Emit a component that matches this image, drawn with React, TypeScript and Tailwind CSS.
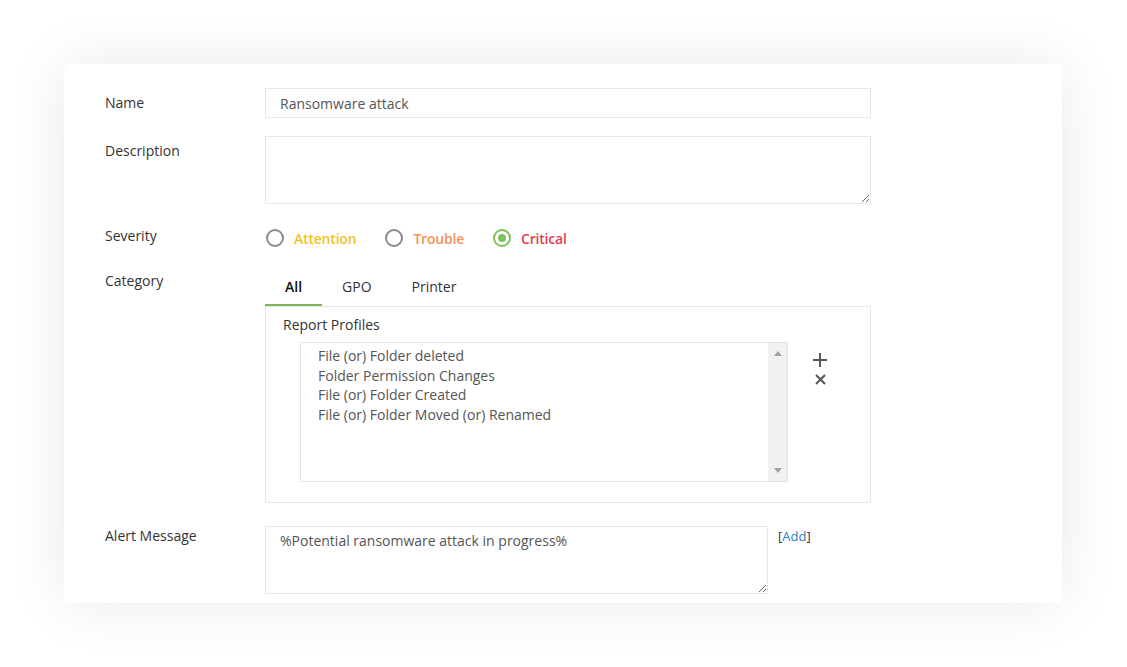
import { useState } from "react"

const profiles = [
  "File (or) Folder deleted",
  "Folder Permission Changes",
  "File (or) Folder Created",
  "File (or) Folder Moved (or) Renamed",
]

const severities = [
  { label: "Attention", color: "text-[#f4c21f]" },
  { label: "Trouble", color: "text-[#f4935a]" },
  { label: "Critical", color: "text-[#e43c4e]" },
]

const tabs = ["All", "GPO", "Printer"]

function Label({ children, className = "" }: { children: React.ReactNode; className?: string }) {
  return <div className={`w-[160px] shrink-0 text-[14px] leading-5 text-[#333] ${className}`}>{children}</div>
}

export default function App() {
  const [severity, setSeverity] = useState("Critical")
  const [tab, setTab] = useState("All")

  return (
    <div className="min-h-[667px] bg-white pt-[64px] px-[64px] font-['Open_Sans',sans-serif]">
      <div className="w-[998px] h-[539px] rounded-md bg-white shadow-[0_0_60px_rgba(0,0,0,0.09)] pt-6 pl-[41px]">
        {/* Name */}
        <div className="flex">
          <Label className="pt-[5px]">Name</Label>
          <input
            defaultValue="Ransomware attack"
            className="w-[606px] h-[30px] border border-[#e6e8e8] px-[14px] text-[14px] text-[#555] outline-none"
          />
        </div>

        {/* Description */}
        <div className="flex mt-[18px]">
          <Label className="pt-[5px]">Description</Label>
          <textarea className="w-[606px] h-[68px] border border-[#e6e8e8] px-[14px] py-1 text-[14px] text-[#555] outline-none" />
        </div>

        {/* Severity */}
        <div className="flex mt-[22px]">
          <Label>Severity</Label>
          <div className="flex items-center gap-[28px] h-5 mt-[2px]">
            {severities.map((s) => {
              const checked = severity === s.label
              return (
                <button key={s.label} onClick={() => setSeverity(s.label)} className="flex items-center gap-[10px] ml-px">
                  <span
                    className={`w-[18px] h-[18px] rounded-full border-2 flex items-center justify-center ${
                      checked ? "border-[#7dc05c]" : "border-[#8a8a8a]"
                    }`}
                  >
                    {checked && <span className="w-[8px] h-[8px] rounded-full bg-[#7dc05c]" />}
                  </span>
                  <span className={`text-[14px] font-semibold tracking-[-0.2px] ${s.color}`}>{s.label}</span>
                </button>
              )
            })}
          </div>
        </div>

        {/* Category */}
        <div className="flex mt-[23px]">
          <Label>Category</Label>
          <div className="w-[606px]">
            <div className="flex h-[35px]">
              {tabs.map((t) => (
                <button
                  key={t}
                  onClick={() => setTab(t)}
                  className={`px-[20px] pb-[3px] text-[14px] border-b-2 ${
                    tab === t ? "border-[#7ab55c] font-semibold text-[#111]" : "border-transparent text-[#333]"
                  }`}
                >
                  {t}
                </button>
              ))}
            </div>
            <div className="h-[197px] border border-[#e6e8e8] pl-[17px] pt-[8px]">
              <div className="text-[14px] leading-5 text-[#333]">Report Profiles</div>
              <div className="flex mt-[7px] ml-[17px]">
                <div className="w-[488px] h-[140px] border border-[#e3e5e5] flex">
                  <div className="flex-1 pl-[17px] pt-[3px] text-[14px] leading-[19.5px] text-[#555]">
                    {profiles.map((p) => (
                      <div key={p}>{p}</div>
                    ))}
                  </div>
                  <div className="w-[19px] bg-[#f0f1f1] flex flex-col items-center justify-between py-[8px]">
                    <svg width="8" height="5" viewBox="0 0 8 5">
                      <path d="M0 5 L4 0 L8 5 Z" fill="#a3a3a3" />
                    </svg>
                    <svg width="8" height="5" viewBox="0 0 8 5">
                      <path d="M0 0 L4 5 L8 0 Z" fill="#a3a3a3" />
                    </svg>
                  </div>
                </div>
                <div className="ml-[25px] mt-[11px] flex flex-col items-center gap-[7px]">
                  <svg width="14" height="14" viewBox="0 0 14 14">
                    <path d="M7 0 V14 M0 7 H14" stroke="#555" strokeWidth="2" />
                  </svg>
                  <svg width="11" height="11" viewBox="0 0 11 11">
                    <path d="M1 1 L10 10 M10 1 L1 10" stroke="#555" strokeWidth="2" />
                  </svg>
                </div>
              </div>
            </div>
          </div>
        </div>

        {/* Alert Message */}
        <div className="flex mt-[23px]">
          <Label>Alert Message</Label>
          <textarea
            defaultValue="%Potential ransomware attack in progress%"
            className="w-[503px] h-[68px] border border-[#e6e8e8] px-[14px] pt-[3px] text-[14px] text-[#555] outline-none"
          />
          <div className="ml-[10px] text-[13px] leading-5 text-[#333]">
            [<span className="text-[#2b7bc4]">Add</span>]
          </div>
        </div>
      </div>
    </div>
  )
}
